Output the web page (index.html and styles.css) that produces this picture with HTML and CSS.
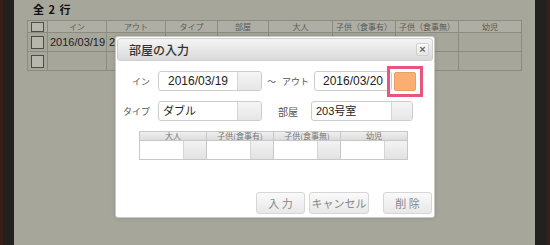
FILE: index.html
```html
<!DOCTYPE html>
<html lang="ja">
<head>
<meta charset="UTF-8">
<title>部屋の入力</title>
<link rel="stylesheet" href="styles.css">
</head>
<body>
  <div class="frame">
    <div class="page">
      <div class="count">全 2 行</div>
      <table class="grid">
        <colgroup>
          <col style="width:20px"><col style="width:59px"><col style="width:59px"><col style="width:52px"><col style="width:51px">
          <col style="width:64px"><col style="width:63px"><col style="width:63px"><col style="width:63px">
        </colgroup>
        <tr class="head">
          <th><span class="chk"></span></th><th>イン</th><th>アウト</th><th>タイプ</th><th>部屋</th>
          <th>大人</th><th>子供（食事有）</th><th>子供（食事無）</th><th>幼児</th>
        </tr>
        <tr>
          <td><span class="chk"></span></td><td class="date">2016/03/19</td><td class="date">2016/03/20</td><td></td><td></td>
          <td></td><td></td><td></td><td></td>
        </tr>
        <tr>
          <td><span class="chk"></span></td><td></td><td></td><td></td><td></td>
          <td></td><td></td><td></td><td></td>
        </tr>
      </table>
    </div>
  </div>

  <div class="dialog">
    <div class="titlebar">
      <span class="title">部屋の入力</span>
      <span class="close">×</span>
    </div>
    <div class="form">
      <div class="row">
        <span class="lbl">イン</span>
        <div class="combo"><span class="txt">2016/03/19</span><span class="pick"></span></div>
        <span class="mid mid-out"><span class="tilde">～</span>アウト</span>
        <div class="combo combo-out"><span class="txt">2016/03/20</span></div>
        <span class="pick-hot"></span>
      </div>
      <div class="row">
        <span class="lbl">タイプ</span>
        <div class="combo"><span class="txt txt-left">ダブル</span><span class="pick"></span></div>
        <span class="mid mid-room">部屋</span>
        <div class="combo combo-room"><span class="txt txt-left">203号室</span><span class="pick"></span></div>
      </div>
      <div class="guests">
        <div class="g-head">
          <span>大人</span><span>子供(食事有)</span><span>子供(食事無)</span><span>幼児</span>
        </div>
        <div class="g-body">
          <div class="g-cell"><span class="g-in"></span><span class="g-btn"></span></div>
          <div class="g-cell"><span class="g-in"></span><span class="g-btn"></span></div>
          <div class="g-cell"><span class="g-in"></span><span class="g-btn"></span></div>
          <div class="g-cell"><span class="g-in"></span><span class="g-btn"></span></div>
        </div>
      </div>
    </div>
    <div class="actions">
      <button class="btn">入 力</button>
      <button class="btn btn-cancel">キャンセル</button>
      <button class="btn btn-del">削 除</button>
    </div>
  </div>
</body>
</html>
```

FILE: styles.css
```css
body {
  margin: 0;
  background-color: #2b2220;
  font-family: "Liberation Sans", "Noto Sans CJK JP", sans-serif;
  width: 550px;
  height: 245px;
  overflow: hidden;
}
.frame {
  height: 245px;
  padding: 0 15px 0 14px;
  background: linear-gradient(to right, #3a1e14 0, #3a1e14 3px, #232120 3px, #232120 547px, #3a1e14 547px);
}
.page {
  height: 245px;
  background-color: #a7a69b;
  padding: 0 13px;
  box-sizing: border-box;
}
.count {
  height: 20px;
  line-height: 19px;
  padding-left: 6px;
  font-size: 11px;
  font-weight: bold;
  color: #111;
  font-family: "Noto Sans CJK JP", sans-serif;
  word-spacing: 2px;
}
.grid {
  border-collapse: collapse;
  table-layout: fixed;
  width: 494px;
}
.grid th,
.grid td {
  border: 1px solid #8c8b82;
  padding: 0;
  text-align: center;
  vertical-align: middle;
}
.grid th {
  height: 11px;
  background-color: #afaea4;
  color: #5b5a55;
  font-weight: normal;
  font-size: 8px;
  font-family: "Noto Sans CJK JP", sans-serif;
  line-height: 10px;
}
.grid td {
  height: 18px;
}
.grid td.date {
  text-align: left;
  padding-left: 2px;
  font-size: 11px;
  color: #222;
  white-space: nowrap;
  overflow: hidden;
}
.chk {
  display: block;
  width: 11px;
  height: 11px;
  margin: 0 auto;
  border: 1px solid #4d4c47;
  background-color: #b8b7ad;
}
.grid th .chk {
  height: 8px;
}

.dialog {
  position: absolute;
  left: 115px;
  top: 36px;
  width: 320px;
  height: 182px;
  box-sizing: border-box;
  background-color: #fff;
  border: 1px solid #c9c9c2;
  border-radius: 3px;
  box-shadow: 0 0 4px rgba(0,0,0,0.15);
  display: flex;
  flex-direction: column;
}
.titlebar {
  margin: 1px;
  height: 23px;
  box-sizing: border-box;
  border: 1px solid #cfcfcf;
  border-radius: 3px;
  background: linear-gradient(#f4f4f4, #dadada);
  display: flex;
  align-items: center;
  justify-content: space-between;
  padding: 0 3px 0 11px;
}
.title {
  font-size: 12px;
  font-weight: 500;
  color: #333;
  font-family: "Noto Sans CJK JP", sans-serif;
}
.close {
  width: 11px;
  height: 11px;
  line-height: 10px;
  text-align: center;
  font-size: 11px;
  font-weight: bold;
  color: #666;
  background: linear-gradient(#fbfbfb, #e4e4e4);
  border: 1px solid #d0d0d0;
  border-radius: 2px;
}
.form {
  padding-top: 9px;
}
.row {
  display: flex;
  align-items: center;
  height: 20px;
  margin-bottom: 10px;
}
.lbl {
  width: 34px;
  margin-right: 8px;
  text-align: right;
  font-size: 9px;
  color: #555;
  font-family: "Noto Sans CJK JP", sans-serif;
}
.combo {
  display: flex;
  width: 104px;
  height: 20px;
  box-sizing: border-box;
  border: 1px solid #cccccc;
  border-radius: 3px;
  overflow: hidden;
}
.txt {
  flex: 1;
  font-size: 12px;
  line-height: 18px;
  color: #222;
  text-align: center;
  white-space: nowrap;
}
.txt-left {
  text-align: left;
  padding-left: 4px;
  font-size: 11px;
}
.pick {
  width: 23px;
  border-left: 1px solid #d5d5d5;
  background: linear-gradient(#f5f5f5, #e6e6e6);
}
.mid {
  font-size: 9px;
  color: #555;
  font-family: "Noto Sans CJK JP", sans-serif;
  box-sizing: border-box;
}
.mid-out {
  width: 52px;
  padding-left: 5px;
}
.tilde {
  display: inline-block;
  width: 15px;
}
.mid-room {
  width: 49px;
  padding-left: 16px;
  font-size: 10px;
}
.combo-out {
  width: 78px;
}
.pick-hot {
  position: relative;
  width: 22px;
  height: 19px;
  margin-left: 2px;
  box-sizing: border-box;
  background-color: #fcae72;
  border: 1px solid #e8a06a;
  border-radius: 2px;
}
.pick-hot::after {
  content: "";
  position: absolute;
  left: -8px;
  right: -8px;
  top: -7px;
  bottom: -7px;
  border: 3px solid #ea5580;
}
.combo-room {
  width: 102px;
}
.combo-room .pick {
  width: 20px;
}
.guests {
  margin: 2px 0 0 23px;
  width: 269px;
  border: 1px solid #c8c8c8;
  box-sizing: border-box;
}
.g-head {
  display: flex;
  height: 8px;
  overflow: hidden;
  background: linear-gradient(#f0f0f0, #dcdcdc);
  border-bottom: 1px solid #c8c8c8;
}
.g-head span {
  flex: 1;
  text-align: center;
  font-size: 8px;
  line-height: 8px;
  color: #777;
  font-family: "Noto Sans CJK JP", sans-serif;
  border-left: 1px solid #c8c8c8;
}
.g-head span:first-child {
  border-left: none;
}
.g-body {
  display: flex;
  height: 18px;
}
.g-cell {
  flex: 1;
  display: flex;
  border-left: 1px solid #c8c8c8;
}
.g-cell:first-child {
  border-left: none;
}
.g-in {
  flex: 1;
  background-color: #fff;
}
.g-btn {
  width: 22px;
  border-left: 1px solid #d5d5d5;
  background: linear-gradient(#f3f3f3, #e2e2e2);
}
.actions {
  margin-top: auto;
  display: flex;
  justify-content: flex-end;
  padding: 0 2px 3px 0;
  gap: 4px;
}
.btn {
  height: 22px;
  width: 49px;
  padding: 0;
  font-size: 11px;
  color: #888;
  font-family: "Noto Sans CJK JP", sans-serif;
  background: linear-gradient(#fafafa, #e8e8e8);
  border: 1px solid #d6d6d6;
  border-radius: 3px;
}
.btn-cancel {
  width: 60px;
}
.btn-del {
  margin-left: 10px;
}
```
